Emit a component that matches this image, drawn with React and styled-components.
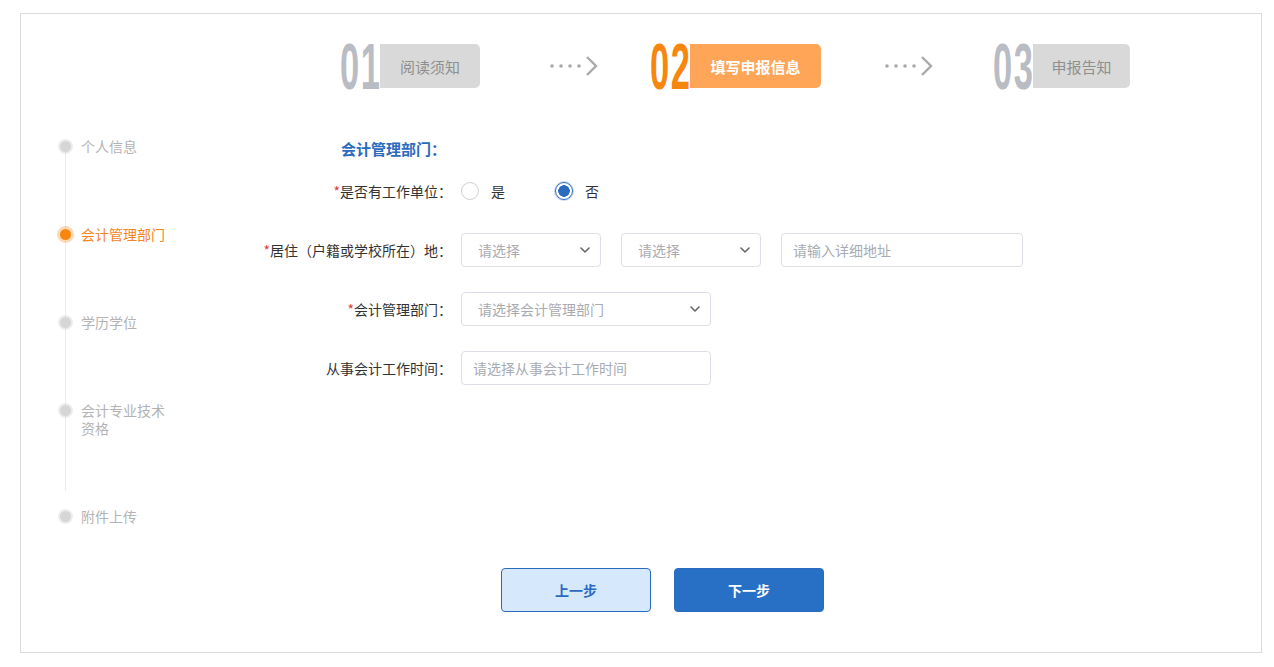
import React from "react";
import styled, { createGlobalStyle } from "styled-components";

const GlobalStyle = createGlobalStyle`
  body {
    margin: 0;
    background: #fff;
    font-family: "Noto Sans CJK SC", "Noto Sans", sans-serif;
  }
  * { box-sizing: border-box; }
`;

const steps = [
  { no: "01", label: "阅读须知", width: 100 },
  { no: "02", label: "填写申报信息", width: 131, active: true, arrow: [70, 52] },
  { no: "03", label: "申报告知", width: 97, arrow: [64, 60] },
];

const sideItems = [
  { text: "个人信息" },
  { text: "会计管理部门", active: true },
  { text: "学历学位" },
  { text: "会计专业技术\n资格", short: true },
  { text: "附件上传", last: true },
];

const ChevronDown = () => (
  <svg width="10" height="6" viewBox="0 0 10 6">
    <path d="M1 1l4 4 4-4" fill="none" stroke="#666" strokeWidth="1.6" strokeLinecap="round" strokeLinejoin="round" />
  </svg>
);

const DotsArrow = () => (
  <svg width="48" height="22" viewBox="0 0 48 22">
    {[2, 11, 20, 29].map((x) => (
      <circle key={x} cx={x} cy="11" r="1.8" fill="#a9a9a9" />
    ))}
    <path d="M37 2l9 9-9 9" fill="none" stroke="#a9a9a9" strokeWidth="2.4" />
  </svg>
);

const App = () => {
  return (
    <Frame>
      <GlobalStyle />
      <StepBar>
        {steps.map((s) => (
          <React.Fragment key={s.no}>
            {s.arrow && (
              <Arrow $left={s.arrow[0]} $right={s.arrow[1]}>
                <DotsArrow />
              </Arrow>
            )}
            <Step>
              <StepNo $active={s.active}>
                <span>{s.no}</span>
              </StepNo>
              <StepLabel $active={s.active} style={{ width: s.width }}>
                {s.label}
              </StepLabel>
            </Step>
          </React.Fragment>
        ))}
      </StepBar>

      <Body>
        <Sidebar>
          {sideItems.map((it) => (
            <SideItem key={it.text} $last={it.last} $short={it.short}>
              <SideDot $active={it.active} />
              <SideText $active={it.active}>{it.text}</SideText>
            </SideItem>
          ))}
        </Sidebar>

        <FormArea>
          <SectionTitle>会计管理部门：</SectionTitle>
          <FormGrid>
            <Label>
              <Req>*</Req>是否有工作单位：
            </Label>
            <Field>
              <RadioOption>
                <Radio />
                <span>是</span>
              </RadioOption>
              <RadioOption>
                <Radio $checked />
                <span>否</span>
              </RadioOption>
            </Field>

            <Label>
              <Req>*</Req>居住（户籍或学校所在）地：
            </Label>
            <Field $gap={20}>
              <Select $width={140}>
                <span>请选择</span>
                <ChevronDown />
              </Select>
              <Select $width={140}>
                <span>请选择</span>
                <ChevronDown />
              </Select>
              <Input $width={242}>请输入详细地址</Input>
            </Field>

            <Label>
              <Req>*</Req>会计管理部门：
            </Label>
            <Field>
              <Select $width={250}>
                <span>请选择会计管理部门</span>
                <ChevronDown />
              </Select>
            </Field>

            <Label>从事会计工作时间：</Label>
            <Field>
              <Input $width={250}>请选择从事会计工作时间</Input>
            </Field>
          </FormGrid>
        </FormArea>
      </Body>

      <ButtonRow>
        <Button>上一步</Button>
        <Button $primary>下一步</Button>
      </ButtonRow>
    </Frame>
  );
};

const Frame = styled.div`
  margin: 13px 0 0 20px;
  width: 1242px;
  height: 640px;
  border: 1px solid #dcdcdc;
  display: flex;
  flex-direction: column;
`;

const StepBar = styled.div`
  display: flex;
  align-items: center;
  padding: 30px 0 0 319px;
  height: 74px;
`;

const Step = styled.div`
  display: flex;
  align-items: center;
  height: 44px;
`;

const StepNo = styled.div`
  width: 40px;
  height: 44px;
  position: relative;
  z-index: 1;
  overflow: visible;

  span {
    display: block;
    font-family: "Liberation Sans", Arial, sans-serif;
    font-weight: 700;
    font-size: 65px;
    line-height: 44px;
    height: 44px;
    letter-spacing: 3px;
    color: ${(p) => (p.$active ? "#f7860f" : "#b9bcc3")};
    transform: scaleX(0.53);
    transform-origin: left center;
    white-space: nowrap;
    margin-top: 1px;
  }
`;

const StepLabel = styled.div`
  height: 44px;
  border-radius: 0 5px 5px 0;
  background: ${(p) => (p.$active ? "#ffa558" : "#d9d9d9")};
  color: ${(p) => (p.$active ? "#fff" : "#8f8f8f")};
  font-weight: ${(p) => (p.$active ? 700 : 400)};
  font-size: 15px;
  display: flex;
  align-items: center;
  justify-content: center;
`;

const Arrow = styled.div`
  display: flex;
  margin: 0 ${(p) => p.$right}px 0 ${(p) => p.$left}px;
`;

const Body = styled.div`
  display: flex;
  margin-top: 49px;
`;

const Sidebar = styled.div`
  width: 219px;
  padding-left: 39px;
  flex-shrink: 0;
`;

const SideItem = styled.div`
  position: relative;
  display: flex;
  align-items: flex-start;
  padding-bottom: ${(p) => (p.$last ? "0" : "70px")};

  &::before {
    content: "";
    display: ${(p) => (p.$last ? "none" : "block")};
    position: absolute;
    left: 5px;
    top: 9px;
    bottom: ${(p) => (p.$short ? "16px" : "-9px")};
    width: 1px;
    background: #ececec;
  }
`;

const SideDot = styled.span`
  position: relative;
  z-index: 1;
  width: 11px;
  height: 11px;
  margin-top: 4px;
  border-radius: 50%;
  flex-shrink: 0;
  background: ${(p) => (p.$active ? "#f7860f" : "#d6d6d6")};
  box-shadow: 0 0 0 ${(p) => (p.$active ? "3px rgba(247,134,15,0.3)" : "2px rgba(214,214,214,0.45)")};
`;

const SideText = styled.span`
  margin-left: 10px;
  font-size: 14px;
  line-height: 18px;
  white-space: pre-line;
  color: ${(p) => (p.$active ? "#f5841c" : "#b3b3b3")};
`;

const FormArea = styled.div`
  flex: 1;
`;

const SectionTitle = styled.div`
  margin-left: 101px;
  margin-top: 1px;
  font-size: 15px;
  font-weight: 700;
  line-height: 22px;
  color: #2a6bc0;
  margin-bottom: 14px;
`;

const FormGrid = styled.div`
  display: grid;
  grid-template-columns: 212px 1fr;
  column-gap: 9px;
  row-gap: 25px;
  align-items: center;
`;

const Label = styled.div`
  text-align: right;
  font-size: 14px;
  color: #333;
  white-space: nowrap;
`;

const Req = styled.span`
  color: #e23a3a;
`;

const Field = styled.div`
  display: flex;
  align-items: center;
  gap: ${(p) => p.$gap || 0}px;
  height: 34px;
`;

const RadioOption = styled.label`
  display: flex;
  align-items: center;
  gap: 12px;
  width: 94px;
  font-size: 14px;
  color: #333;
`;

const Radio = styled.span`
  width: 18px;
  height: 18px;
  border-radius: 50%;
  border: 1px solid ${(p) => (p.$checked ? "#2a6bc0" : "#cfcfcf")};
  background: ${(p) => (p.$checked ? "radial-gradient(circle, #2a6bc0 0 5.5px, #fff 6px)" : "#fff")};
  box-shadow: ${(p) => (p.$checked ? "0 0 0 1px rgba(42,107,192,0.25)" : "none")};
`;

const Select = styled.div`
  width: ${(p) => p.$width}px;
  height: 34px;
  border: 1px solid #dcdfe6;
  border-radius: 4px;
  padding: 0 10px 0 16px;
  display: flex;
  align-items: center;
  justify-content: space-between;
  font-size: 14px;
  color: #a8abb2;
`;

const Input = styled.div`
  width: ${(p) => p.$width}px;
  height: 34px;
  border: 1px solid #dcdfe6;
  border-radius: 4px;
  padding: 0 11px;
  display: flex;
  align-items: center;
  font-size: 14px;
  color: #a8abb2;
`;

const ButtonRow = styled.div`
  display: flex;
  gap: 23px;
  margin-top: auto;
  margin-bottom: 40px;
  padding-left: 480px;
`;

const Button = styled.button`
  width: 150px;
  height: 44px;
  border-radius: 4px;
  font-family: "Noto Sans CJK SC", sans-serif;
  font-size: 14px;
  font-weight: 700;
  cursor: pointer;
  border: 1px solid #2a6bc0;
  background: ${(p) => (p.$primary ? "#2770c6" : "#d6e8fb")};
  color: ${(p) => (p.$primary ? "#fff" : "#2a6bc0")};
`;

export default App;
